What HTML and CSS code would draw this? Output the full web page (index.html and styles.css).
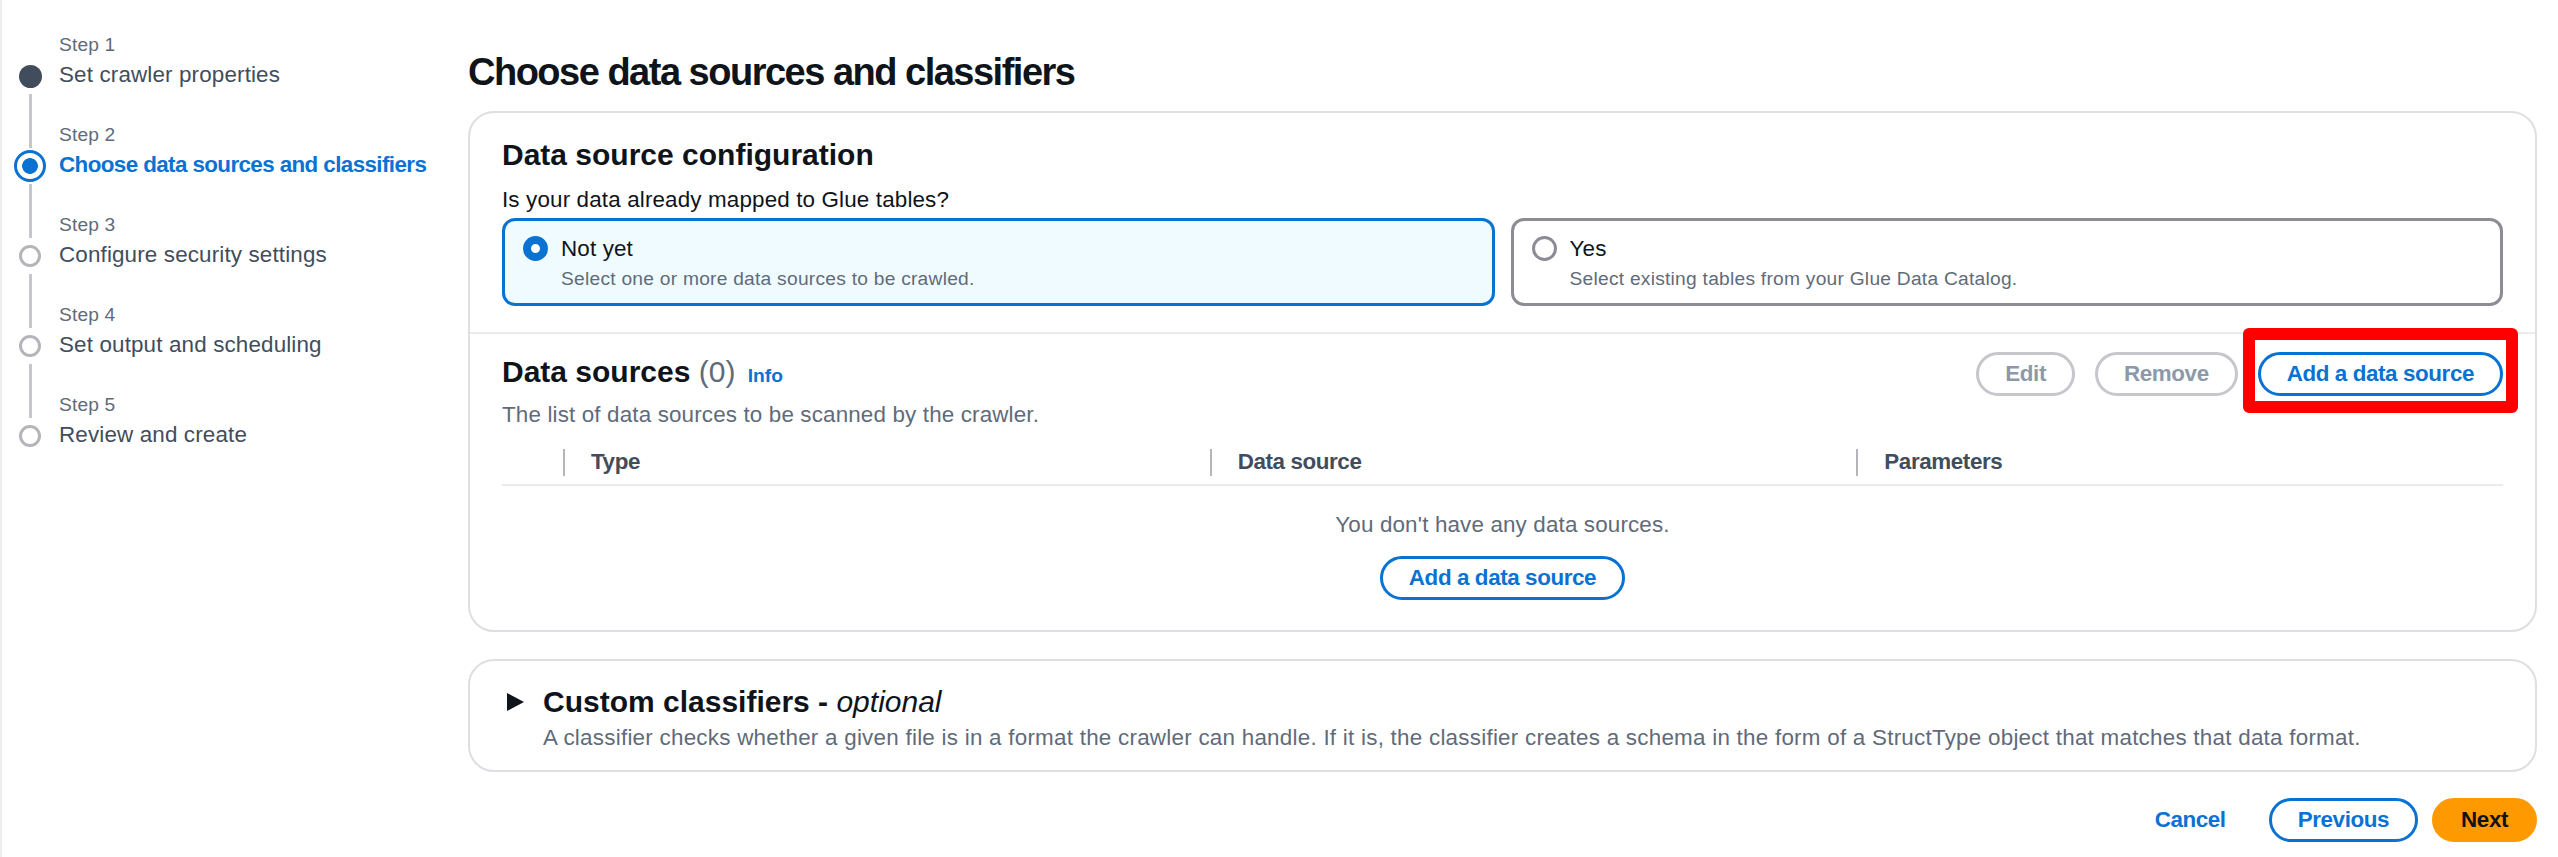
FILE: index.html
```html
<!DOCTYPE html>
<html lang="en">
<head>
<meta charset="utf-8">
<title>Add crawler - Choose data sources and classifiers</title>
<link rel="stylesheet" href="styles.css">
</head>
<body>
<div class="page">
  <nav class="steps">
    <ol>
      <li class="step done"><span class="marker"></span><span class="step-label">Step 1</span><span class="step-title">Set crawler properties</span></li>
      <li class="step active"><span class="marker"></span><span class="step-label">Step 2</span><span class="step-title">Choose data sources and classifiers</span></li>
      <li class="step"><span class="marker"></span><span class="step-label">Step 3</span><span class="step-title">Configure security settings</span></li>
      <li class="step"><span class="marker"></span><span class="step-label">Step 4</span><span class="step-title">Set output and scheduling</span></li>
      <li class="step"><span class="marker"></span><span class="step-label">Step 5</span><span class="step-title">Review and create</span></li>
    </ol>
  </nav>
  <main class="content">
    <h1 class="page-title">Choose data sources and classifiers</h1>
    <section class="container">
      <div class="cfg">
        <h2 class="h2">Data source configuration</h2>
        <p class="field-label">Is your data already mapped to Glue tables?</p>
        <div class="tiles">
          <div class="tile selected">
            <span class="radio"></span>
            <div class="tile-text">
              <div class="tile-title">Not yet</div>
              <div class="tile-desc">Select one or more data sources to be crawled.</div>
            </div>
          </div>
          <div class="tile">
            <span class="radio"></span>
            <div class="tile-text">
              <div class="tile-title">Yes</div>
              <div class="tile-desc">Select existing tables from your Glue Data Catalog.</div>
            </div>
          </div>
        </div>
      </div>
      <div class="sources">
        <div class="src-head">
          <h2 class="h2">Data sources <span class="count">(0)</span> <a class="info">Info</a></h2>
          <div class="actions">
            <button class="btn disabled">Edit</button>
            <button class="btn disabled">Remove</button>
            <span class="highlight"><button class="btn">Add a data source</button></span>
          </div>
        </div>
        <p class="src-desc">The list of data sources to be scanned by the crawler.</p>
        <div class="table-head">
          <div class="th sel"></div>
          <div class="th">Type</div>
          <div class="th">Data source</div>
          <div class="th">Parameters</div>
        </div>
        <div class="empty">
          <p class="empty-text">You don't have any data sources.</p>
          <button class="btn">Add a data source</button>
        </div>
      </div>
    </section>
    <section class="container expand">
      <div class="exp-head">
        <svg class="caret" width="33" height="40" viewBox="0 0 33 40" aria-hidden="true"><polygon points="5,11 22,20 5,29" fill="#0f141a"/></svg>
        <div class="exp-body">
          <h2 class="h2">Custom classifiers - <i class="opt">optional</i></h2>
          <p class="exp-desc">A classifier checks whether a given file is in a format the crawler can handle. If it is, the classifier creates a schema in the form of a StructType object that matches that data format.</p>
        </div>
      </div>
    </section>
    <div class="footer">
      <button class="btn link">Cancel</button>
      <button class="btn">Previous</button>
      <button class="btn primary">Next</button>
    </div>
  </main>
</div>
</body>
</html>
```

FILE: styles.css
```css
* { box-sizing: border-box; }

html, body {
  margin: 0;
  background: #ffffff;
}

body {
  font-family: "Liberation Sans", Arial, sans-serif;
  color: #0f141a;
  font-size: 22.4px;
  line-height: 32px;
  letter-spacing: 0.15px;
}

.page {
  display: grid;
  grid-template-columns: 466px 2069px;
  border-left: 2px solid #eceef0;
  min-height: 857px;
}

/* ---------- Steps navigation ---------- */
.steps ol {
  list-style: none;
  margin: 0;
  padding: 31px 0 0 0;
}

.step {
  position: relative;
  padding-left: 57px;
  height: 60px;
  margin-bottom: 30px;
}

.step:not(:last-child)::after {
  content: "";
  position: absolute;
  left: 27px;
  top: 63px;
  width: 3px;
  height: 54px;
  background: #c6c6cd;
}

.step-label {
  display: block;
  font-size: 19.2px;
  line-height: 28px;
  color: #5f6b7a;
}

.step-title {
  display: block;
  font-size: 22.4px;
  line-height: 32px;
  color: #414d5c;
  white-space: nowrap;
}

.step.active .step-title {
  color: #0972d3;
  font-weight: 700;
  letter-spacing: -0.6px;
}

.marker {
  position: absolute;
  left: 17px;
  top: 34px;
  width: 22px;
  height: 22px;
  border-radius: 50%;
  border: 3px solid #b4b4bb;
  background: #fff;
}

.step.done .marker {
  left: 17px;
  top: 34px;
  width: 23px;
  height: 23px;
  border: none;
  background: #414d5c;
}

.step.active .marker {
  left: 12px;
  top: 29px;
  width: 32px;
  height: 32px;
  border: 3px solid #0972d3;
  background: radial-gradient(circle, #0972d3 0 7.5px, #ffffff 8.2px);
}

/* ---------- Main content ---------- */
.content {
  padding-top: 48px;
}

.page-title {
  margin: 0 0 15px 0;
  font-size: 38px;
  line-height: 48px;
  font-weight: 700;
  letter-spacing: -1.5px;
  color: #0f141a;
}

.container {
  border: 2px solid #dedee3;
  border-radius: 26px;
  background: #fff;
}

.h2 {
  margin: 0;
  font-size: 30px;
  line-height: 40px;
  font-weight: 700;
  letter-spacing: 0;
  color: #0f141a;
}

.cfg {
  padding: 22px 32px 26px 32px;
}

.field-label {
  margin: 9px 0 2px 0;
  color: #0f141a;
}

.tiles {
  display: grid;
  grid-template-columns: 1fr 1fr;
  gap: 16px;
}

.tile {
  display: flex;
  align-items: flex-start;
  gap: 13px;
  height: 88px;
  padding: 12px 18px 11px 18px;
  border: 3px solid #8c8c94;
  border-radius: 13px;
  background: #fff;
}

.tile.selected {
  border-color: #0972d3;
  background: #f0fbff;
}

.radio {
  flex: none;
  width: 25px;
  height: 25px;
  margin-top: 3px;
  border-radius: 50%;
  border: 3px solid #8c8c94;
  background: #fff;
}

.tile.selected .radio {
  border: 8.5px solid #0972d3;
}

.tile-title {
  color: #0f141a;
}

.tile-desc {
  font-size: 19.2px;
  line-height: 28px;
  letter-spacing: 0.25px;
  color: #5f6b7a;
}

.sources {
  border-top: 2px solid #e9ebed;
  padding: 18px 32px 30px 32px;
}

.src-head {
  display: flex;
  align-items: center;
  justify-content: space-between;
  height: 44px;
}

.count {
  font-weight: 400;
  color: #5f6b7a;
}

.info {
  margin-left: 4px;
  font-size: 19.2px;
  font-weight: 700;
  color: #0972d3;
  text-decoration: none;
}

.actions {
  display: flex;
  align-items: center;
  gap: 20px;
}

.highlight {
  position: relative;
  display: inline-flex;
}

.highlight::after {
  content: "";
  position: absolute;
  left: -15px;
  right: -15px;
  top: -24px;
  bottom: -17px;
  border: 12px solid #ff0000;
  border-radius: 6px;
  pointer-events: none;
  z-index: 2;
}

.src-desc {
  margin: 3px 0 0 0;
  color: #5f6b7a;
}

.table-head {
  display: grid;
  grid-template-columns: 61px 1fr 1fr 1fr;
  margin-top: 15px;
  padding-bottom: 6px;
  border-bottom: 2px solid #e9ebed;
}

.th {
  display: flex;
  align-items: center;
  height: 32px;
  font-weight: 700;
  letter-spacing: -0.4px;
  color: #414d5c;
}

.th:not(.sel)::before {
  content: "";
  width: 2px;
  height: 27px;
  margin-right: 26px;
  background: #b4b4bb;
}

.empty {
  display: flex;
  flex-direction: column;
  align-items: center;
  padding-top: 23px;
}

.empty-text {
  margin: 0 0 15px 0;
  color: #5f6b7a;
}

/* ---------- Buttons ---------- */
.btn {
  height: 44px;
  padding: 0 26px;
  border: 3px solid #0972d3;
  border-radius: 22px;
  background: #fff;
  color: #0972d3;
  font-family: "Liberation Sans", Arial, sans-serif;
  font-size: 22.4px;
  line-height: 38px;
  font-weight: 700;
  letter-spacing: -0.4px;
  white-space: nowrap;
  cursor: pointer;
}

.btn.disabled {
  border-color: #c6c6cd;
  color: #8d99a8;
}

.btn.link {
  border-color: transparent;
  background: transparent;
}

.btn.primary {
  border-color: #ff9900;
  background: #ff9900;
  color: #0f141a;
}

/* ---------- Expandable section ---------- */
.expand {
  margin-top: 27px;
}

.exp-head {
  display: flex;
  align-items: flex-start;
  gap: 8px;
  padding: 21px 32px 16px 32px;
}

.caret {
  flex: none;
  display: block;
}

.opt {
  font-weight: 400;
  font-style: italic;
}

.exp-desc {
  margin: 0;
  letter-spacing: 0.25px;
  color: #5f6b7a;
}

/* ---------- Footer ---------- */
.footer {
  display: flex;
  justify-content: flex-end;
  gap: 14px;
  margin-top: 26px;
}
```
